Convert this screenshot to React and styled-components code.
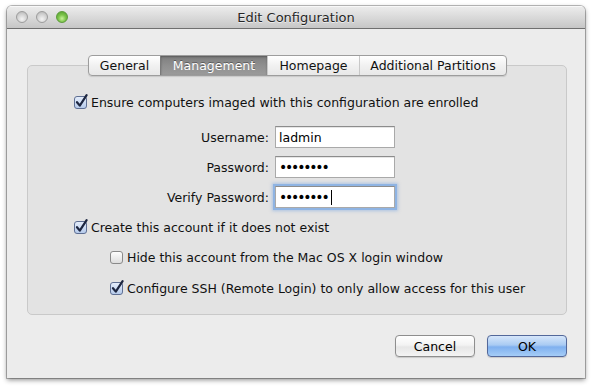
import React from "react";
import styled, { createGlobalStyle } from "styled-components";

const Global = createGlobalStyle`
  html, body { margin: 0; padding: 0; background: #ffffff; }
  body { font-family: "DejaVu Sans", "Liberation Sans", sans-serif; font-size: 12.5px; color: #000; }
`;

const Page = styled.div`
  width: 594px;
  height: 386px;
  padding: 6px 0 0 7px;
  box-sizing: border-box;
`;

const Window = styled.div`
  width: 578px;
  height: 372px;
  display: flex;
  flex-direction: column;
  background: #ececec;
  border-radius: 5px 5px 0 0;
  box-shadow: 0 0 0 1px rgba(0,0,0,0.25), 0 2px 5px rgba(0,0,0,0.45);
  overflow: hidden;
`;

const TitleBar = styled.div`
  height: 22px;
  flex: none;
  position: relative;
  display: flex;
  align-items: center;
  justify-content: center;
  background: linear-gradient(#ededed, #d6d6d6 60%, #c6c6c6);
  border-bottom: 1px solid #6f6f6f;
  box-shadow: inset 0 1px 0 #f8f8f8;
`;

const Lights = styled.div`
  position: absolute;
  left: 9px;
  top: 5px;
  display: flex;
  gap: 8px;
`;

const Light = styled.span`
  width: 12px;
  height: 12px;
  border-radius: 50%;
  box-sizing: border-box;
  border: 1px solid ${(p) => (p.$green ? "#5c9a3a" : "#9c9c9c")};
  background: ${(p) =>
    p.$green
      ? "radial-gradient(circle at 50% 65%, #c8f29a 0%, #7cc44a 45%, #4f9a2c 100%)"
      : "radial-gradient(circle at 50% 70%, #f4f4f4 0%, #d4d4d4 50%, #b2b2b2 100%)"};
`;

const Title = styled.span`
  font-size: 13px;
  color: #262626;
  text-shadow: 0 1px 0 rgba(255,255,255,0.6);
`;

const Content = styled.div`
  flex: 1;
  display: flex;
  flex-direction: column;
  padding: 26px 18px 19px 20px;
`;

const TabBar = styled.div`
  align-self: flex-start;
  margin-left: 61px;
  display: flex;
  height: 21px;
  box-sizing: border-box;
  border: 1px solid #9d9d9d;
  border-radius: 4px;
  background: linear-gradient(#ffffff, #f1f1f1 50%, #e8e8e8);
  overflow: hidden;
  position: relative;
  z-index: 1;
  margin-bottom: -11px;
  box-shadow: 0 1px 1px rgba(0,0,0,0.12);
`;

const Tab = styled.div`
  width: ${(p) => p.$w}px;
  display: flex;
  align-items: center;
  justify-content: center;
  font-size: 12.5px;
  color: ${(p) => (p.$active ? "#ffffff" : "#111")};
  background: ${(p) => (p.$active ? "linear-gradient(#7e7e7e, #8f8f8f 50%, #9b9b9b)" : "transparent")};
  text-shadow: ${(p) => (p.$active ? "0 -1px 0 rgba(0,0,0,0.35)" : "none")};
  border-left: ${(p) => (p.$first ? "none" : p.$active ? "1px solid #7a7a7a" : "1px solid #c8c8c8")};
  box-shadow: ${(p) => (p.$active ? "inset 0 1px 2px rgba(0,0,0,0.3)" : "none")};
`;

const GroupBox = styled.div`
  height: 250px;
  box-sizing: border-box;
  border: 1px solid #c9c9c9;
  border-radius: 5px;
  background: #e3e3e3;
  padding: 28px 0 0 45px;
  display: flex;
  flex-direction: column;
`;

const CheckRow = styled.label`
  display: flex;
  align-items: center;
  gap: 2px;
  height: 16px;
  margin-left: ${(p) => p.$indent || 0}px;
  margin-top: ${(p) => p.$top || 0}px;
  white-space: nowrap;
  color: #111;
`;

const Form = styled.div`
  display: grid;
  grid-template-columns: 160px 120px;
  column-gap: 6px;
  row-gap: 8px;
  margin: 16px 0 0 36px;
  align-items: center;
`;

const FieldLabel = styled.span`
  text-align: right;
  color: #111;
`;

const Input = styled.div`
  height: 22px;
  box-sizing: border-box;
  background: #fff;
  border: 1px solid #a9a9a9;
  border-top-color: #8c8c8c;
  box-shadow: ${(p) => (p.$focus ? "0 0 0 2px #8fb4e3, 0 0 3px 3px rgba(120,165,225,0.5)" : "inset 0 1px 0 #e6e6e6")};
  padding: 0 3px;
  display: flex;
  align-items: center;
  font-size: ${(p) => (p.$secret ? "14px" : "12.5px")};
  letter-spacing: ${(p) => (p.$secret ? "-2.2px" : "0")};
`;

const Caret = styled.span`
  display: inline-block;
  width: 1px;
  height: 15px;
  background: #000;
  margin-left: 4px;
`;

const Buttons = styled.div`
  margin-top: 20px;
  display: flex;
  justify-content: flex-end;
  gap: 12px;
`;

const Button = styled.div`
  width: 80px;
  height: 22px;
  box-sizing: border-box;
  border-radius: 4px;
  display: flex;
  align-items: center;
  justify-content: center;
  font-size: 12.5px;
  border: 1px solid ${(p) => (p.$primary ? "#53689a" : "#8e8e8e")};
  background: ${(p) =>
    p.$primary
      ? "linear-gradient(#d6e6fa, #a9cbf3 45%, #7fb0ef 55%, #a5cdf7)"
      : "linear-gradient(#ffffff, #f3f3f3 45%, #e6e6e6 55%, #f4f4f4)"};
  box-shadow: 0 1px 1px rgba(0,0,0,0.15);
`;

function CheckBox({ checked }) {
  return (
    <svg width="16" height="16" viewBox="0 0 16 16" style={{ flex: "none" }}>
      <defs>
        <linearGradient id={checked ? "cbOn" : "cbOff"} x1="0" y1="0" x2="0" y2="1">
          <stop offset="0" stopColor={checked ? "#e6eefb" : "#ffffff"} />
          <stop offset="1" stopColor={checked ? "#b4c9ea" : "#dcdcdc"} />
        </linearGradient>
      </defs>
      <rect x="1.5" y="2.5" width="12" height="12" rx="2.5" fill={`url(#${checked ? "cbOn" : "cbOff"})`} stroke={checked ? "#5f6f93" : "#8a8a8a"} />
      {checked && (
        <path d="M4 8.2 L6.8 11.6 L13.6 1.2" fill="none" stroke="#1d2640" strokeWidth="2.2" strokeLinecap="round" strokeLinejoin="round" />
      )}
    </svg>
  );
}

export default function App() {
  return (
    <>
      <Global />
      <Page>
        <Window>
          <TitleBar>
            <Lights>
              <Light />
              <Light />
              <Light $green />
            </Lights>
            <Title>Edit Configuration</Title>
          </TitleBar>
          <Content>
            <TabBar>
              <Tab $first $w={71}>General</Tab>
              <Tab $active $w={106}>Management</Tab>
              <Tab $w={91}>Homepage</Tab>
              <Tab $w={146}>Additional Partitions</Tab>
            </TabBar>
            <GroupBox>
              <CheckRow>
                <CheckBox checked />
                Ensure computers imaged with this configuration are enrolled
              </CheckRow>
              <Form>
                <FieldLabel>Username:</FieldLabel>
                <Input>ladmin</Input>
                <FieldLabel>Password:</FieldLabel>
                <Input $secret>••••••••</Input>
                <FieldLabel>Verify Password:</FieldLabel>
                <Input $secret $focus>••••••••<Caret /></Input>
              </Form>
              <CheckRow $top={11}>
                <CheckBox checked />
                Create this account if it does not exist
              </CheckRow>
              <CheckRow $indent={36} $top={14}>
                <CheckBox />
                Hide this account from the Mac OS X login window
              </CheckRow>
              <CheckRow $indent={36} $top={15}>
                <CheckBox checked />
                Configure SSH (Remote Login) to only allow access for this user
              </CheckRow>
            </GroupBox>
            <Buttons>
              <Button>Cancel</Button>
              <Button $primary>OK</Button>
            </Buttons>
          </Content>
        </Window>
      </Page>
    </>
  );
}
